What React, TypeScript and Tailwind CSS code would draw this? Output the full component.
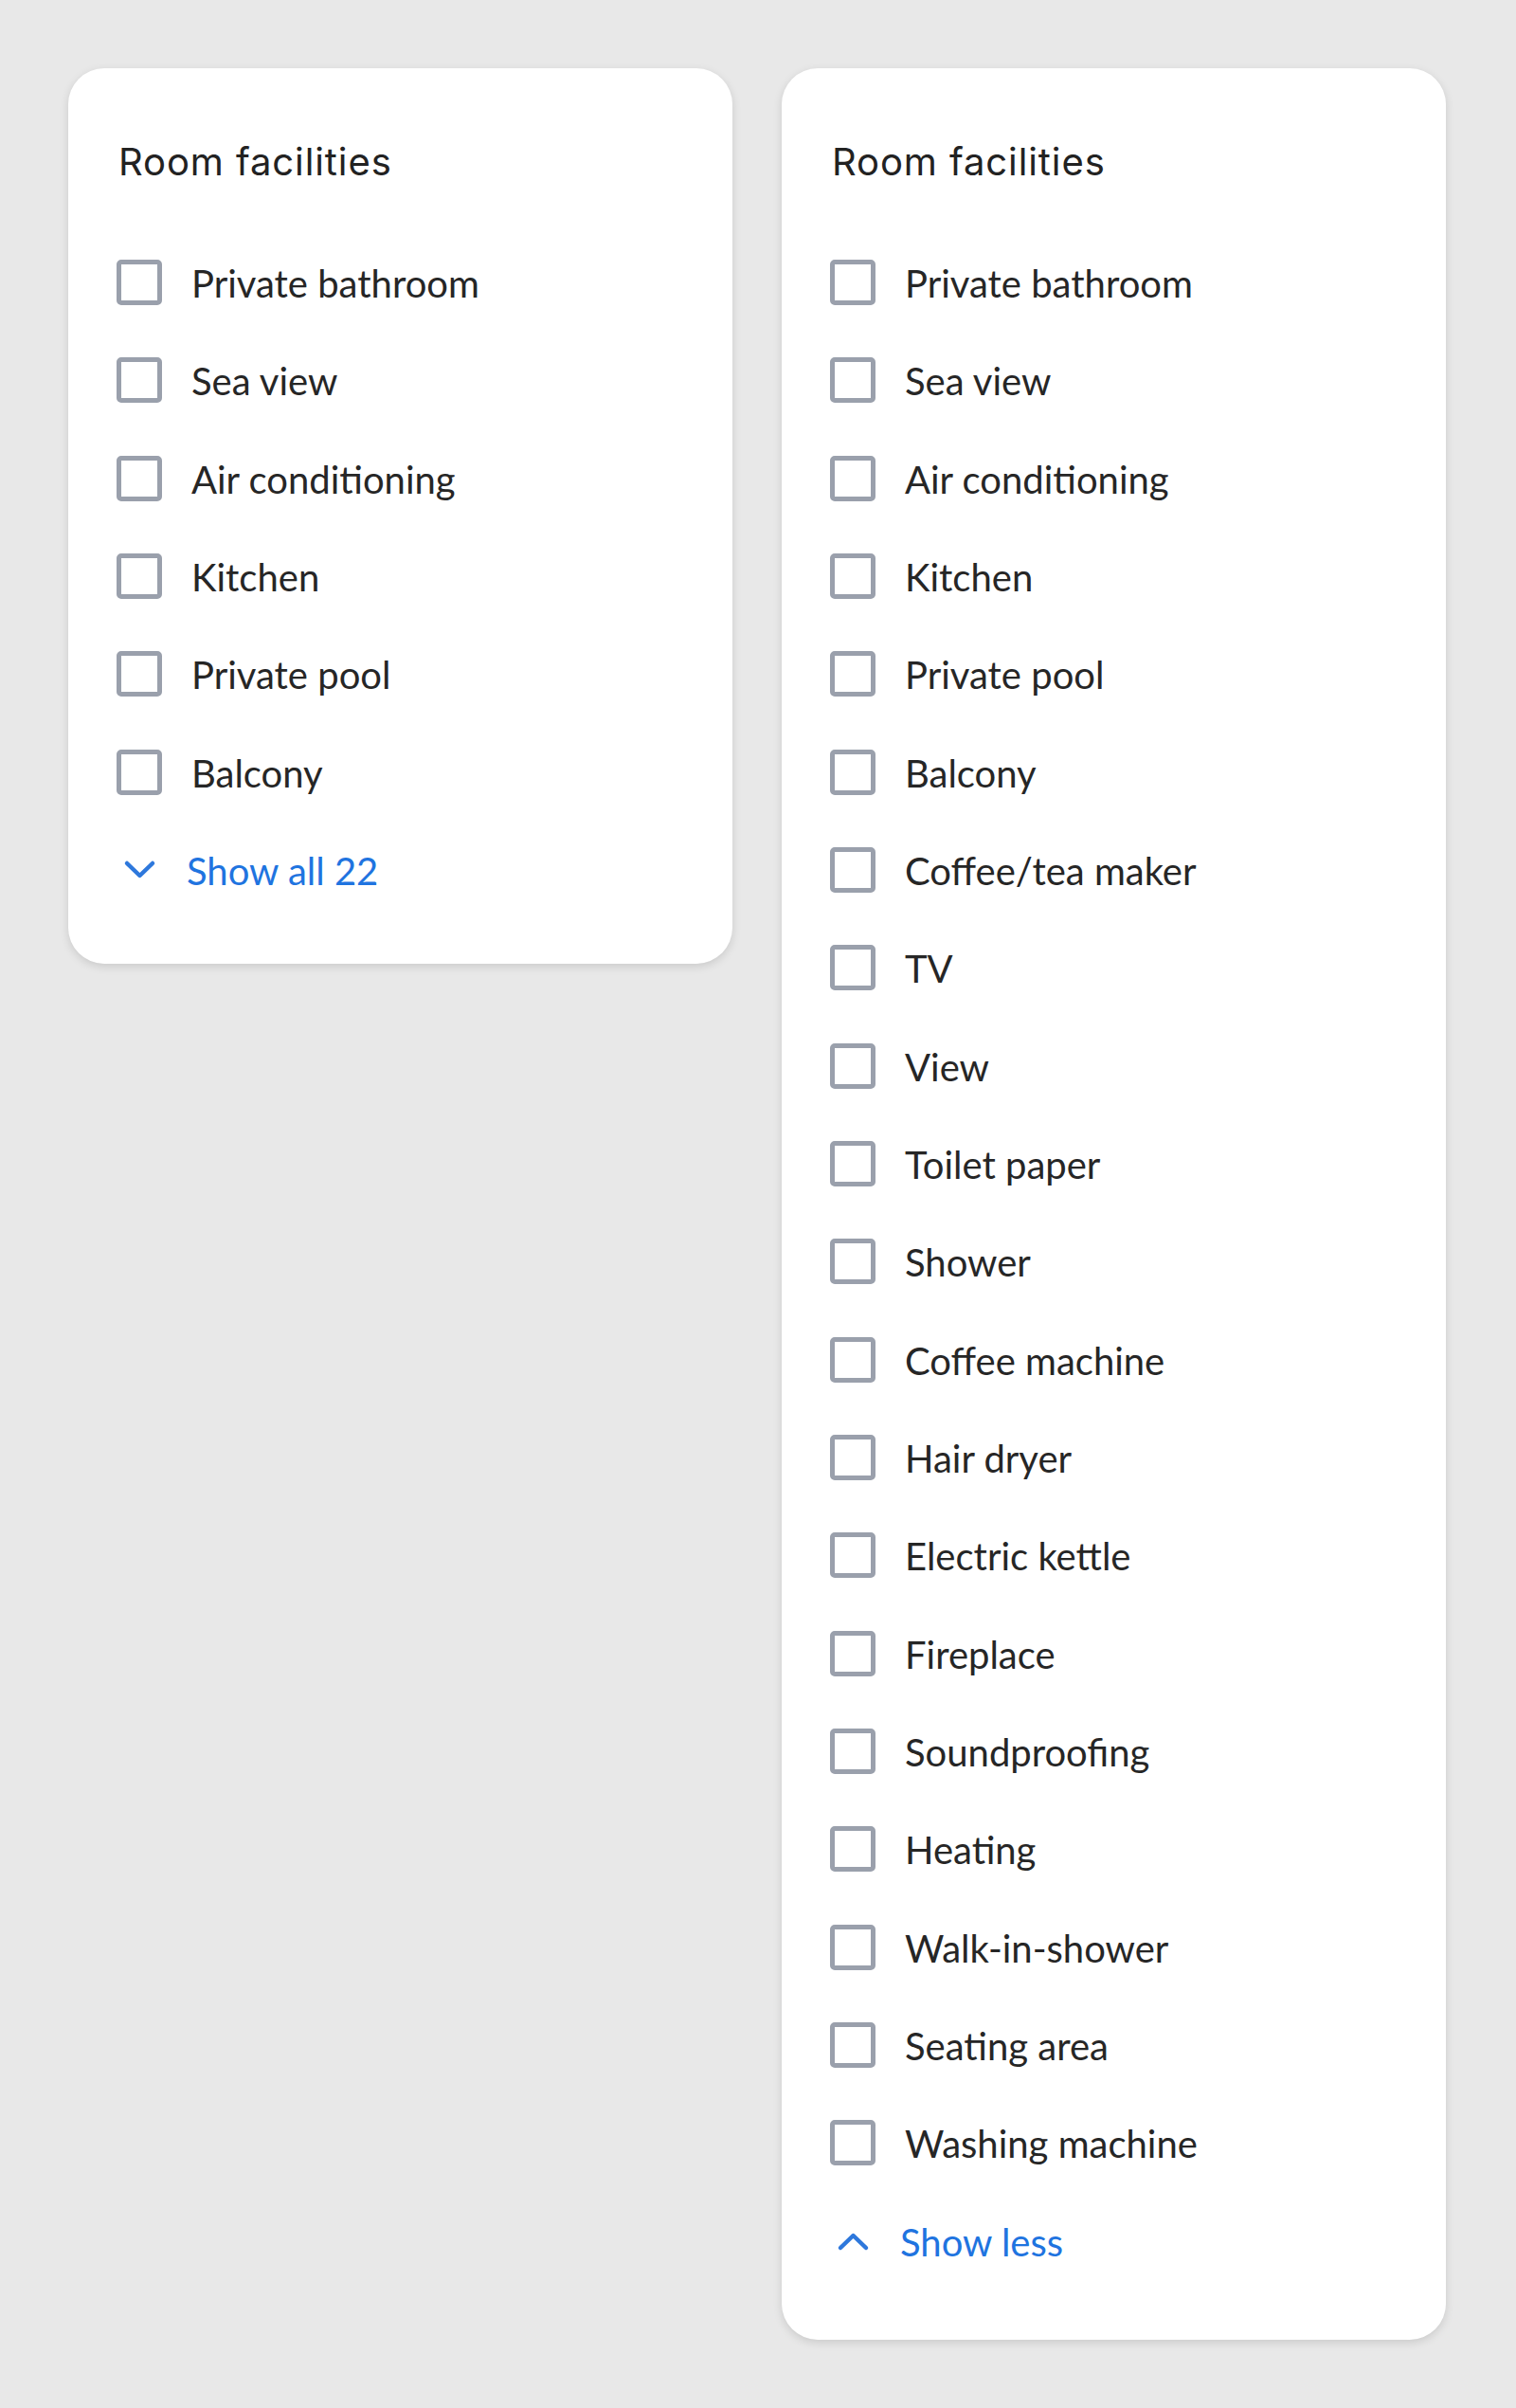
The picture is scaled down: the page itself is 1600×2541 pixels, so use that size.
import React from "react";

const shortList = [
  "Private bathroom",
  "Sea view",
  "Air conditioning",
  "Kitchen",
  "Private pool",
  "Balcony",
];

const fullList = [
  ...shortList,
  "Coffee/tea maker",
  "TV",
  "View",
  "Toilet paper",
  "Shower",
  "Coffee machine",
  "Hair dryer",
  "Electric kettle",
  "Fireplace",
  "Soundproofing",
  "Heating",
  "Walk-in-shower",
  "Seating area",
  "Washing machine",
];

function Row({ label }: { label: string }) {
  return (
    <label className="flex h-12 items-center">
      <span className="box-border h-12 w-12 shrink-0 rounded-[5px] border-[5px] border-[#9aa0ac] bg-white" />
      <span
        className="ml-[31px] translate-y-[1px] text-[40px] leading-[48px] text-[#262626]"
        style={{ fontFamily: "Lato, 'Liberation Sans', sans-serif" }}
      >
        {label}
      </span>
    </label>
  );
}

function Toggle({ expanded, text }: { expanded: boolean; text: string }) {
  return (
    <button className="flex h-12 items-center text-left">
      <svg width="48" height="48" viewBox="0 0 48 48" className="shrink-0">
        <path
          d={expanded ? "M11 31 L24.5 18 L38 31" : "M11 17 L24.5 30 L38 17"}
          fill="none"
          stroke="#2e78dc"
          strokeWidth="4.5"
          strokeLinecap="round"
          strokeLinejoin="round"
        />
      </svg>
      <span
        className="ml-[26px] translate-y-[1px] text-[40px] leading-[48px] text-[#1f74e0]"
        style={{ fontFamily: "Lato, 'Liberation Sans', sans-serif" }}
      >
        {text}
      </span>
    </button>
  );
}

function Card({
  items,
  expanded,
  toggleText,
  pb,
}: {
  items: string[];
  expanded: boolean;
  toggleText: string;
  pb: string;
}) {
  return (
    <div
      className={`w-[701px] rounded-[38px] bg-white pl-[51px] pr-[40px] pt-[75px] shadow-[0_3px_10px_rgba(0,0,0,0.13)] ${pb}`}
    >
      <h2
        className="pl-[2px] text-[40px] font-normal leading-[48px] tracking-[0.9px] text-[#222222]"
        style={{ fontFamily: "Inter, 'Noto Sans', sans-serif" }}
      >
        Room facilities
      </h2>
      <div className="mt-[79px] flex flex-col gap-[55.33px]">
        {items.map((it) => (
          <Row key={it} label={it} />
        ))}
        <Toggle expanded={expanded} text={toggleText} />
      </div>
    </div>
  );
}

export default function App() {
  return (
    <div className="flex min-h-[2541px] items-start gap-[52px] bg-[#e8e8e8] pl-[72px] pt-[72px]">
      <Card items={shortList} expanded={false} toggleText="Show all 22" pb="pb-[75px]" />
      <Card items={fullList} expanded={true} toggleText="Show less" pb="pb-[80px]" />
    </div>
  );
}
